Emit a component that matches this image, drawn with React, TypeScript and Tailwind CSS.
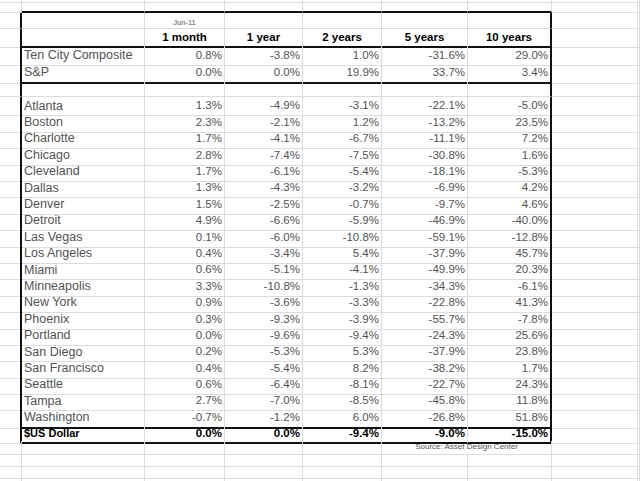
import React from "react";

type Row = { name: string; vals: string[] };

const top: Row[] = [
  { name: "Ten City Composite", vals: ["0.8%", "-3.8%", "1.0%", "-31.6%", "29.0%"] },
  { name: "S&P", vals: ["0.0%", "0.0%", "19.9%", "33.7%", "3.4%"] },
];

const cities: Row[] = [
  { name: "Atlanta", vals: ["1.3%", "-4.9%", "-3.1%", "-22.1%", "-5.0%"] },
  { name: "Boston", vals: ["2.3%", "-2.1%", "1.2%", "-13.2%", "23.5%"] },
  { name: "Charlotte", vals: ["1.7%", "-4.1%", "-6.7%", "-11.1%", "7.2%"] },
  { name: "Chicago", vals: ["2.8%", "-7.4%", "-7.5%", "-30.8%", "1.6%"] },
  { name: "Cleveland", vals: ["1.7%", "-6.1%", "-5.4%", "-18.1%", "-5.3%"] },
  { name: "Dallas", vals: ["1.3%", "-4.3%", "-3.2%", "-6.9%", "4.2%"] },
  { name: "Denver", vals: ["1.5%", "-2.5%", "-0.7%", "-9.7%", "4.6%"] },
  { name: "Detroit", vals: ["4.9%", "-6.6%", "-5.9%", "-46.9%", "-40.0%"] },
  { name: "Las Vegas", vals: ["0.1%", "-6.0%", "-10.8%", "-59.1%", "-12.8%"] },
  { name: "Los Angeles", vals: ["0.4%", "-3.4%", "5.4%", "-37.9%", "45.7%"] },
  { name: "Miami", vals: ["0.6%", "-5.1%", "-4.1%", "-49.9%", "20.3%"] },
  { name: "Minneapolis", vals: ["3.3%", "-10.8%", "-1.3%", "-34.3%", "-6.1%"] },
  { name: "New York", vals: ["0.9%", "-3.6%", "-3.3%", "-22.8%", "41.3%"] },
  { name: "Phoenix", vals: ["0.3%", "-9.3%", "-3.9%", "-55.7%", "-7.8%"] },
  { name: "Portland", vals: ["0.0%", "-9.6%", "-9.4%", "-24.3%", "25.6%"] },
  { name: "San Diego", vals: ["0.2%", "-5.3%", "5.3%", "-37.9%", "23.8%"] },
  { name: "San Francisco", vals: ["0.4%", "-5.4%", "8.2%", "-38.2%", "1.7%"] },
  { name: "Seattle", vals: ["0.6%", "-6.4%", "-8.1%", "-22.7%", "24.3%"] },
  { name: "Tampa", vals: ["2.7%", "-7.0%", "-8.5%", "-45.8%", "11.8%"] },
  { name: "Washington", vals: ["-0.7%", "-1.2%", "6.0%", "-26.8%", "51.8%"] },
];

const dollar: Row = { name: "$US Dollar", vals: ["0.0%", "0.0%", "-9.4%", "-9.0%", "-15.0%"] };

const GRID = "grid grid-cols-[22px_123px_80px_78px_79px_86px_84px_86px_1fr]";

function cellClass(col: number, inTable: boolean, thickBottom: boolean) {
  const right =
    inTable && (col === 0 || col === 6)
      ? "border-r-2 border-r-[#111111]"
      : "border-r border-r-[#dcdcdc]";
  const bottom =
    thickBottom && col >= 1 && col <= 6
      ? "border-b-2 border-b-[#111111]"
      : "border-b border-b-[#dcdcdc]";
  return `${right} ${bottom} flex items-center min-w-0 overflow-visible whitespace-nowrap`;
}

function Blank({
  h,
  inTable = false,
  thickBottom = false,
}: {
  h: string;
  inTable?: boolean;
  thickBottom?: boolean;
}) {
  return (
    <div className={`${GRID} ${h}`}>
      {Array.from({ length: 9 }).map((_, i) => (
        <div key={i} className={cellClass(i, inTable, thickBottom)} />
      ))}
    </div>
  );
}

function DataRow({
  row,
  h,
  thickBottom = false,
  bold = false,
}: {
  row: Row;
  h: string;
  thickBottom?: boolean;
  bold?: boolean;
}) {
  return (
    <div className={`${GRID} ${h}`}>
      <div className={cellClass(0, true, thickBottom)} />
      <div className={`${cellClass(1, true, thickBottom)} pl-[2px]`}>
        <span
          className={
            bold
              ? "text-[11px] font-bold text-black"
              : "text-[12.5px] text-[#525252]"
          }
        >
          {row.name}
        </span>
      </div>
      {row.vals.map((v, i) => (
        <div
          key={i}
          className={`${cellClass(i + 2, true, thickBottom)} justify-end pr-[2px]`}
        >
          <span
            className={
              bold
                ? "text-[11.5px] font-bold text-black"
                : "text-[11.5px] text-[#525252]"
            }
          >
            {v}
          </span>
        </div>
      ))}
      <div className={cellClass(7, true, false)} />
      <div className={cellClass(8, true, false)} />
    </div>
  );
}

const headers = ["1 month", "1 year", "2 years", "5 years", "10 years"];

export default function App() {
  return (
    <div
      className="w-[640px] h-[481px] overflow-hidden bg-white"
      style={{ fontFamily: '"Liberation Sans", Arial, sans-serif' }}
    >
      <Blank h="h-[2.5px]" />
      <Blank h="h-[10px]" thickBottom />
      {/* Jun-11 row */}
      <div className={`${GRID} h-[16.5px]`}>
        <div className={cellClass(0, true, false)} />
        <div className={cellClass(1, true, false)} />
        <div className={`${cellClass(2, true, false)} justify-center items-end pb-[2px]`}>
          <span className="text-[7.5px] leading-none text-[#555555]">Jun-11</span>
        </div>
        <div className={cellClass(3, true, false)} />
        <div className={cellClass(4, true, false)} />
        <div className={cellClass(5, true, false)} />
        <div className={cellClass(6, true, false)} />
        <div className={cellClass(7, true, false)} />
        <div className={cellClass(8, true, false)} />
      </div>
      {/* Header row */}
      <div className={`${GRID} h-[17px]`}>
        <div className={cellClass(0, true, true)} />
        <div className={cellClass(1, true, true)} />
        {headers.map((t, i) => (
          <div key={t} className={`${cellClass(i + 2, true, true)} justify-center`}>
            <span className="text-[11.5px] font-bold text-black">{t}</span>
          </div>
        ))}
        <div className={cellClass(7, true, false)} />
        <div className={cellClass(8, true, false)} />
      </div>
      <DataRow row={top[0]} h="h-[17px]" />
      <DataRow row={top[1]} h="h-[17px]" thickBottom />
      <Blank h="h-[16.7px]" inTable />
      {cities.map((c, i) => (
        <DataRow
          key={c.name}
          row={c}
          h="h-[16.4px]"
          thickBottom={i === cities.length - 1}
        />
      ))}
      <DataRow row={dollar} h="h-[16.4px]" thickBottom bold />
      {/* Source row */}
      <div className={`${GRID} h-[14px]`}>
        {[0, 1, 2, 3, 4].map((i) => (
          <div key={i} className={cellClass(i, false, false)} />
        ))}
        <div className={`${cellClass(6, false, false)} col-span-2 justify-center`}>
          <span className="text-[8px] text-[#555555]">Source: Asset Design Center</span>
        </div>
        <div className={cellClass(7, false, false)} />
        <div className={cellClass(8, false, false)} />
      </div>
      <Blank h="h-[12px]" />
      <Blank h="h-[12px]" />
      <Blank h="h-[12px]" />
    </div>
  );
}
